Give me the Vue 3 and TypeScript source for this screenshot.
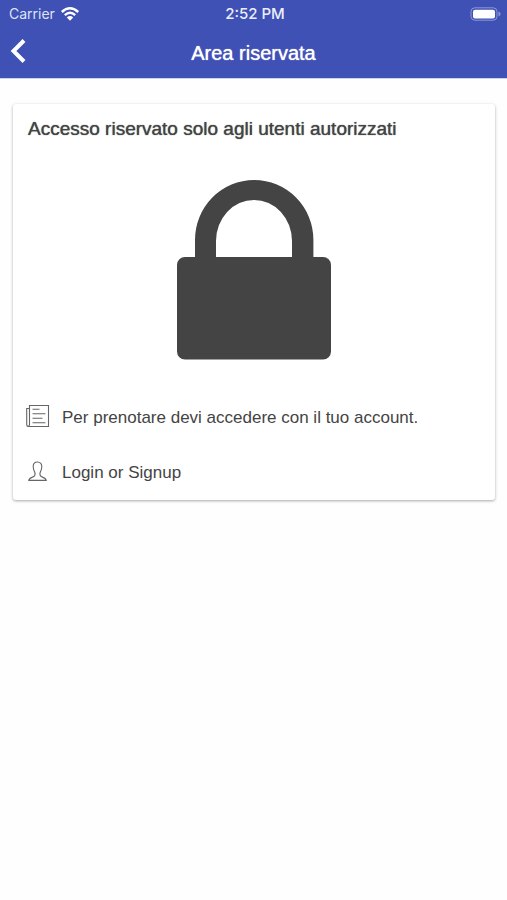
<script setup lang="ts">
import { ref } from 'vue'

const title = ref<string>('Area riservata')
const time = ref<string>('2:52 PM')
</script>

<template>
  <div class="page">
    <header class="header">
      <div class="status">
        <div class="carrier">
          <span>Carrier</span>
          <svg class="wifi" viewBox="0 0 18 14" aria-hidden="true">
            <g fill="none" stroke="#fff" stroke-width="2.4">
              <path d="M.8 5Q9-2.4 17.2 5" />
              <path d="M3.8 8.1Q9 3.5 14.2 8.1" />
            </g>
            <path d="M9 13.7 5.8 10.4Q9 7.7 12.2 10.4Z" fill="#fff" />
          </svg>
        </div>
        <span class="time">{{ time }}</span>
        <svg class="battery" viewBox="0 0 31 14" aria-hidden="true">
          <rect x="1" y=".8" width="26" height="12.4" rx="3.8" fill="none" stroke="#8f99d6" stroke-width="1" />
          <rect x="3" y="2.7" width="22" height="8.8" rx="2" fill="#fff" />
          <path d="M28.5 4.6Q30.6 5.5 30.6 7T28.5 9.4Z" fill="#8f99d6" />
        </svg>
      </div>
      <nav class="bar">
        <button class="back" type="button" aria-label="Indietro">
          <svg viewBox="0 0 16 24" aria-hidden="true">
            <path d="M14 1.5 3.5 12 14 22.5" fill="none" stroke="#fff" stroke-width="4" />
          </svg>
        </button>
        <h1 class="title">{{ title }}</h1>
      </nav>
    </header>

    <main class="content">
      <section class="card">
        <h2 class="heading">Accesso riservato solo agli utenti autorizzati</h2>
        <svg class="lock" viewBox="0 0 154 180" aria-hidden="true">
          <path
            fill="#444"
            d="M8 77H18V60A59.2 60 0 0 1 136.400 60V77H146A8 8 0 0 1 154 85V171.500A8 8 0 0 1 146 179.500H8A8 8 0 0 1 0 171.500V85A8 8 0 0 1 8 77ZM39 77H115V61A38 41 0 0 0 39 61Z"
          />
        </svg>
        <ul class="list">
          <li class="row">
            <svg class="icon" viewBox="0 0 24 24" aria-hidden="true">
              <g fill="none" stroke="#666" stroke-width="1.1">
                <path d="M3.5 20.5V1.5H22.5V22.5H3Q.7 22.5.7 20.2V4.5H3.5M3.5 19.5Q3.5 22.3 2.5 22.3" />
                <path d="M6.5 5.3H13.5M6.5 9.8H19.5M6.5 14.3H16.5M6.5 18.7H19.5" />
              </g>
            </svg>
            <span>Per prenotare devi accedere con il tuo account.</span>
          </li>
          <li>
            <a class="row" href="#login">
              <svg class="icon" viewBox="0 0 24 24" aria-hidden="true">
                <path
                  fill="none"
                  stroke="#666"
                  stroke-width="1.1"
                  d="M11.500 3C8.500 3 7.200 5 7.200 7.500C7.200 11 8.700 12 9 14.200C9.400 16.700 8.700 17.500 6.500 18.100C4.200 18.800 3.200 19.300 2.800 21.400H20.200C19.800 19.300 18.800 18.800 16.500 18.100C14.300 17.500 13.600 16.700 14 14.200C14.300 12 15.800 11 15.800 7.500C15.800 5 14.500 3 11.500 3Z"
                />
              </svg>
              <span>Login or Signup</span>
            </a>
          </li>
        </ul>
      </section>
    </main>
  </div>
</template>

<style>
body {
  margin: 0;
  background: #fefefe;
}
</style>

<style scoped>
.page {
  min-height: 100vh;
  color: #444;
  font-family: 'Liberation Sans', Arial, sans-serif;
}

.header {
  background: #3f51b5;
  border-bottom: 1px solid #cdd2ec;
  color: #fff;
}

.status {
  display: grid;
  grid-template-columns: 1fr auto 1fr;
  align-items: center;
  height: 27px;
  padding: 0 6px 0 9px;
  font-family: Inter, sans-serif;
  font-size: 14px;
}

.carrier {
  display: flex;
  align-items: center;
  gap: 6px;
  color: #dfe2f4;
}

.wifi {
  width: 18px;
  height: 14px;
}

.time {
  font-weight: 500;
  font-size: 15px;
  color: #eceefa;
}

.battery {
  width: 31px;
  height: 14px;
  justify-self: end;
}

.bar {
  display: grid;
  grid-template-columns: 48px 1fr 48px;
  align-items: center;
  height: 51px;
}

.back {
  display: flex;
  align-items: center;
  align-self: start;
  height: 48px;
  padding: 0 10px;
  border: 0;
  background: none;
  cursor: pointer;
}

.back svg {
  width: 16px;
  height: 24px;
}

.title,
.heading {
  margin: 0;
  font-weight: 400;
  text-shadow: 0 0 1px currentColor;
}

.title {
  font-size: 20px;
  line-height: 24px;
  text-align: center;
}

.content {
  padding: 25px 12px 24px 13px;
}

.card {
  display: flex;
  flex-direction: column;
  border-radius: 3px;
  background: #fff;
  box-shadow: 0 1px 3px rgba(0, 0, 0, 0.34);
}

.heading {
  padding: 13px 15px;
  font-size: 19px;
  line-height: 24px;
}

.lock {
  width: 154px;
  height: 180px;
  margin: 26px auto 30px;
}

.list {
  margin: 0;
  padding: 0;
  list-style: none;
}

.row {
  display: flex;
  align-items: center;
  gap: 12px;
  height: 55px;
  padding: 0 13px;
  color: inherit;
  font-size: 17px;
  text-decoration: none;
}

.icon {
  width: 24px;
  height: 24px;
  flex: none;
  margin-bottom: 4px;
}
</style>
